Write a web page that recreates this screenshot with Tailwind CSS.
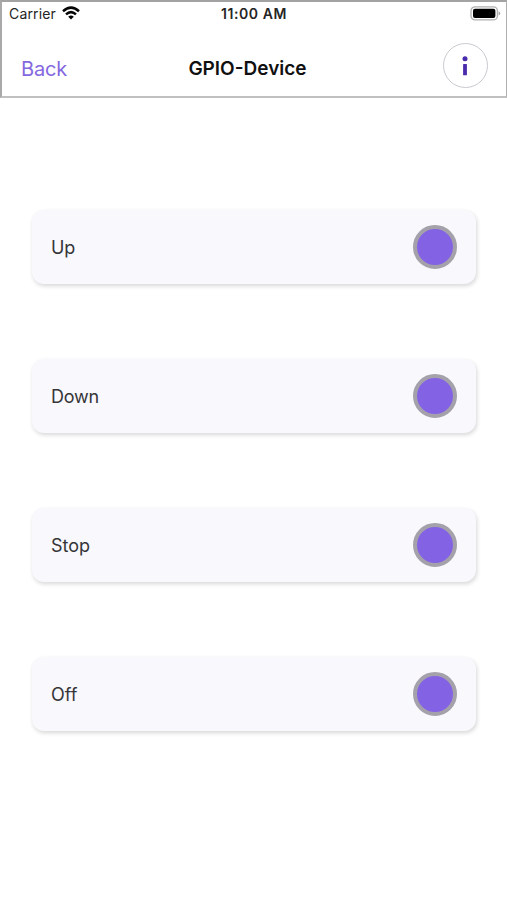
<!DOCTYPE html>
<html lang="en">
<head>
<meta charset="utf-8">
<title>GPIO-Device</title>
<script src="https://cdn.jsdelivr.net/npm/@tailwindcss/browser@4"></script>
</head>
<body class="bg-white font-['Inter','Liberation_Sans',sans-serif] w-[507px] h-[900px] overflow-hidden">
<header class="h-[98px] border-t-2 border-l-2 border-r border-b-2 border-t-[#a3a3a3] border-l-[#a9a9a9] border-r-[#b0b0b0] border-b-[#c0c0c0]">
  <div class="grid grid-cols-3 items-center h-6 pl-[7px] pr-[5px] text-[14px] leading-6 text-[#252525]">
    <div class="flex items-center gap-[6px]">
      <span class="tracking-[0.15px]">Carrier</span>
      <svg class="w-[18px] h-[14px] -mt-[2px]" viewBox="0 0 18 14" fill="none" stroke="#050505" stroke-width="2.5">
        <path d="M1 5.2Q9-2 17 5.2"/><path d="M4 8.4Q9 3.9 14 8.4"/><path d="M6.2 10.8Q9 8.3 11.8 10.8L9 13.6Z" fill="#050505" stroke="none"/>
      </svg>
    </div>
    <div class="text-center font-semibold tracking-[0.55px] whitespace-nowrap -ml-px mr-px">11:00 AM</div>
    <svg class="justify-self-end w-[31px] h-[15px] -mt-[2px]" viewBox="0 0 31 15">
      <rect x="1" y=".9" width="26.4" height="13" rx="4" fill="#fff" stroke="#b0b0b0" stroke-width="1.3"/>
      <rect x="3" y="2.8" width="22.4" height="9.2" rx="2" fill="#000"/>
      <path d="M28.6 5.2Q32 7.4 28.6 9.6Z" fill="#a5a5a5"/>
    </svg>
  </div>
  <div class="grid grid-cols-3 items-center h-[44px] mt-[17px] pl-[19px] pr-[18px]">
    <a class="text-[20px] text-[#8468e0] leading-6 pt-[6px] tracking-[-0.2px]">Back</a>
    <h1 class="text-center text-[19px] font-semibold text-[#101010] leading-6 pt-[6px] -ml-[7px] mr-[7px] whitespace-nowrap">GPIO-Device</h1>
    <button class="justify-self-end size-[45px] rounded-full border border-[#cbc9d0] flex items-center justify-center">
      <svg class="w-[6px] h-[20px] -ml-px" viewBox="0 0 6 20" fill="#4a2bab"><circle cx="3" cy="2.7" r="2.5"/><rect x="1.1" y="8" width="3.8" height="11.3" rx=".6"/></svg>
    </button>
  </div>
</header>
<main class="flex flex-col gap-[75px] pt-[112px] pl-8 pr-[31px] text-[18px] tracking-[-0.2px] text-[#353538]">
  <div class="h-[74px] rounded-[12px] bg-[#f8f8fd] shadow-[1px_2px_4px_rgba(0,0,0,0.16)] flex items-center justify-between pl-[19px] pr-[19px]"><span>Up</span><span class="size-11 rounded-full bg-[#8363e3] border-4 border-[#a5a1ab]"></span></div>
  <div class="h-[74px] rounded-[12px] bg-[#f8f8fd] shadow-[1px_2px_4px_rgba(0,0,0,0.16)] flex items-center justify-between pl-[19px] pr-[19px]"><span>Down</span><span class="size-11 rounded-full bg-[#8363e3] border-4 border-[#a5a1ab]"></span></div>
  <div class="h-[74px] rounded-[12px] bg-[#f8f8fd] shadow-[1px_2px_4px_rgba(0,0,0,0.16)] flex items-center justify-between pl-[19px] pr-[19px]"><span class="tracking-normal">Stop</span><span class="size-11 rounded-full bg-[#8363e3] border-4 border-[#a5a1ab]"></span></div>
  <div class="h-[74px] rounded-[12px] bg-[#f8f8fd] shadow-[1px_2px_4px_rgba(0,0,0,0.16)] flex items-center justify-between pl-[19px] pr-[19px]"><span class="tracking-normal">Off</span><span class="size-11 rounded-full bg-[#8363e3] border-4 border-[#a5a1ab]"></span></div>
</main>
</body>
</html>
